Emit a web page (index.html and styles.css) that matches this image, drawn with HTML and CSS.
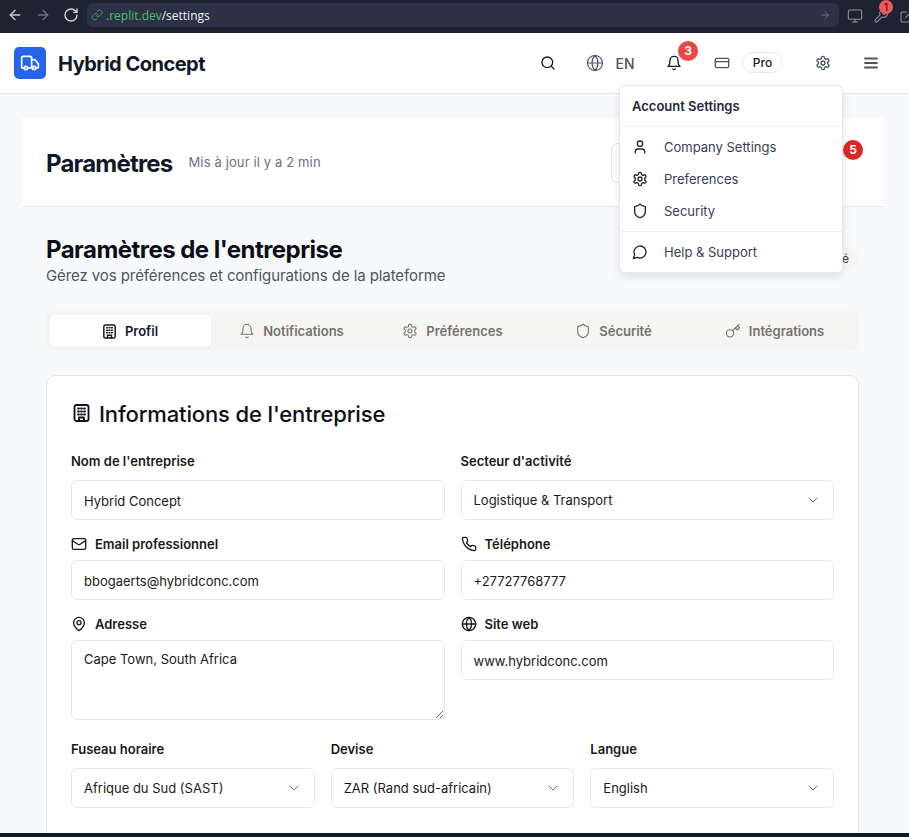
FILE: index.html
```html
<!DOCTYPE html>
<html lang="fr">
<head>
  <meta charset="UTF-8"/>
  <meta name="viewport" content="width=device-width, initial-scale=1.0"/>
  <title>Paramètres</title>
  <link rel="stylesheet" href="styles.css">
</head>
<body>
  <svg class="sprites" width="0" height="0">
    <symbol id="i-truck" viewBox="0 0 24 24"><path d="M14 18V6a2 2 0 0 0-2-2H4a2 2 0 0 0-2 2v11a1 1 0 0 0 1 1h2"/><path d="M15 18H9"/><path d="M19 18h2a1 1 0 0 0 1-1v-3.65a1 1 0 0 0-.22-.624l-3.48-4.35A1 1 0 0 0 17.52 8H14"/><circle cx="17" cy="18" r="2"/><circle cx="7" cy="18" r="2"/></symbol>
    <symbol id="i-search" viewBox="0 0 24 24"><circle cx="11" cy="11" r="8"/><path d="m21 21-4.3-4.3"/></symbol>
    <symbol id="i-globe" viewBox="0 0 24 24"><circle cx="12" cy="12" r="10"/><path d="M12 2a14.5 14.5 0 0 0 0 20 14.5 14.5 0 0 0 0-20"/><path d="M2 12h20"/></symbol>
    <symbol id="i-bell" viewBox="0 0 24 24"><path d="M6 8a6 6 0 0 1 12 0c0 7 3 9 3 9H3s3-2 3-9"/><path d="M10.3 21a1.94 1.94 0 0 0 3.4 0"/></symbol>
    <symbol id="i-card" viewBox="0 0 24 24"><rect x="2" y="5" width="20" height="14" rx="2"/><path d="M2 10h20"/></symbol>
    <symbol id="i-gear" viewBox="0 0 24 24"><path d="M12.22 2h-.44a2 2 0 0 0-2 2v.18a2 2 0 0 1-1 1.73l-.43.25a2 2 0 0 1-2 0l-.15-.08a2 2 0 0 0-2.73.73l-.22.38a2 2 0 0 0 .73 2.73l.15.1a2 2 0 0 1 1 1.72v.51a2 2 0 0 1-1 1.74l-.15.09a2 2 0 0 0-.73 2.73l.22.38a2 2 0 0 0 2.73.73l.15-.08a2 2 0 0 1 2 0l.43.25a2 2 0 0 1 1 1.73V20a2 2 0 0 0 2 2h.44a2 2 0 0 0 2-2v-.18a2 2 0 0 1 1-1.73l.43-.25a2 2 0 0 1 2 0l.15.08a2 2 0 0 0 2.73-.73l.22-.39a2 2 0 0 0-.73-2.73l-.15-.08a2 2 0 0 1-1-1.74v-.5a2 2 0 0 1 1-1.74l.15-.09a2 2 0 0 0 .73-2.73l-.22-.38a2 2 0 0 0-2.73-.73l-.15.08a2 2 0 0 1-2 0l-.43-.25a2 2 0 0 1-1-1.73V4a2 2 0 0 0-2-2z"/><circle cx="12" cy="12" r="3"/></symbol>
    <symbol id="i-menu" viewBox="0 0 24 24"><path d="M4 6h16"/><path d="M4 12h16"/><path d="M4 18h16"/></symbol>
    <symbol id="i-user" viewBox="0 0 24 24"><path d="M19 21v-2a4 4 0 0 0-4-4H9a4 4 0 0 0-4 4v2"/><circle cx="12" cy="7" r="4"/></symbol>
    <symbol id="i-shield" viewBox="0 0 24 24"><path d="M20 13c0 5-3.5 7.5-7.66 8.95a1 1 0 0 1-.67-.01C7.5 20.5 4 18 4 13V6a1 1 0 0 1 1-1c2 0 4.5-1.2 6.24-2.72a1.17 1.17 0 0 1 1.52 0C14.51 3.81 17 5 19 5a1 1 0 0 1 1 1z"/></symbol>
    <symbol id="i-message" viewBox="0 0 24 24"><path d="M7.9 20A9 9 0 1 0 4 16.1L2 22Z"/></symbol>
    <symbol id="i-building" viewBox="0 0 16 18"><rect x="1" y="1" width="14" height="16" rx="2"/><path d="M4.5 4.5h1M7.5 4.5h1M10.5 4.5h1M4.5 7.5h1M7.5 7.5h1M10.5 7.5h1M4.5 10.5h1M7.5 10.5h1M10.5 10.5h1"/><path d="M5.5 17v-3.5h5V17"/></symbol>
    <symbol id="i-mail" viewBox="0 0 24 24"><rect x="2" y="4" width="20" height="16" rx="2"/><path d="m22 7-8.97 5.7a1.94 1.94 0 0 1-2.06 0L2 7"/></symbol>
    <symbol id="i-phone" viewBox="0 0 24 24"><path d="M22 16.92v3a2 2 0 0 1-2.18 2 19.79 19.79 0 0 1-8.63-3.07 19.5 19.5 0 0 1-6-6 19.79 19.79 0 0 1-3.07-8.67A2 2 0 0 1 4.11 2h3a2 2 0 0 1 2 1.72 12.84 12.84 0 0 0 .7 2.81 2 2 0 0 1-.45 2.11L8.09 9.91a16 16 0 0 0 6 6l1.27-1.27a2 2 0 0 1 2.11-.45 12.84 12.84 0 0 0 2.81.7A2 2 0 0 1 22 16.92z"/></symbol>
    <symbol id="i-pin" viewBox="0 0 24 24"><path d="M20 10c0 6-8 12-8 12s-8-6-8-12a8 8 0 0 1 16 0Z"/><circle cx="12" cy="10" r="3"/></symbol>
    <symbol id="i-key" viewBox="0 0 24 24"><circle cx="7.5" cy="15.5" r="5.5"/><path d="m21 2-9.6 9.6"/><path d="m15.5 7.5 3 3L22 7l-3-3"/></symbol>
    <symbol id="i-chevron" viewBox="0 0 24 24"><path d="m6 9 6 6 6-6"/></symbol>
    <symbol id="i-left" viewBox="0 0 24 24"><path d="m12 19-7-7 7-7"/><path d="M19 12H5"/></symbol>
    <symbol id="i-right" viewBox="0 0 24 24"><path d="M5 12h14"/><path d="m12 5 7 7-7 7"/></symbol>
    <symbol id="i-reload" viewBox="0 0 24 24"><path d="M21 12a9 9 0 1 1-9-9c2.52 0 4.93 1 6.74 2.74L21 8"/><path d="M21 3v5h-5"/></symbol>
    <symbol id="i-link" viewBox="0 0 24 24"><path d="M10 13a5 5 0 0 0 7.54.54l3-3a5 5 0 0 0-7.07-7.07l-1.72 1.71"/><path d="M14 11a5 5 0 0 0-7.54-.54l-3 3a5 5 0 0 0 7.07 7.07l1.71-1.71"/></symbol>
    <symbol id="i-monitor" viewBox="0 0 24 24"><rect x="2" y="3" width="20" height="14" rx="2"/><path d="M8 21h8"/><path d="M12 17v4"/></symbol>
    <symbol id="i-wrench" viewBox="0 0 24 24"><path d="M14.7 6.3a1 1 0 0 0 0 1.4l1.6 1.6a1 1 0 0 0 1.4 0l3.77-3.77a6 6 0 0 1-7.94 7.94l-6.91 6.91a2.12 2.12 0 0 1-3-3l6.91-6.91a6 6 0 0 1 7.94-7.94l-3.76 3.76z"/></symbol>
    <symbol id="i-external" viewBox="0 0 24 24"><path d="M15 3h6v6"/><path d="M10 14 21 3"/><path d="M18 13v6a2 2 0 0 1-2 2H5a2 2 0 0 1-2-2V8a2 2 0 0 1 2-2h6"/></symbol>
  </svg>

  <div class="browser-bar">
    <svg class="icon chrome-icon"><use href="#i-left"/></svg>
    <svg class="icon chrome-icon dim"><use href="#i-right"/></svg>
    <svg class="icon chrome-icon reload"><use href="#i-reload"/></svg>
    <div class="url-bar">
      <svg class="icon url-link"><use href="#i-link"/></svg>
      <span class="url-host">.replit.dev</span><span class="url-path">/settings</span>
      <svg class="icon url-go"><use href="#i-right"/></svg>
    </div>
    <svg class="icon chrome-tool"><use href="#i-monitor"/></svg>
    <span class="tool-wrap">
      <svg class="icon chrome-tool"><use href="#i-wrench"/></svg>
      <span class="tool-badge">1</span>
    </span>
    <svg class="icon chrome-tool"><use href="#i-external"/></svg>
  </div>

  <header class="topbar">
    <div class="brand">
      <span class="brand-logo"><svg class="icon"><use href="#i-truck"/></svg></span>
      <span class="brand-name">Hybrid Concept</span>
    </div>
    <nav class="topnav">
      <svg class="icon nav-icon dark nav-search"><use href="#i-search"/></svg>
      <span class="nav-group">
        <svg class="icon nav-globe"><use href="#i-globe"/></svg>
        <span class="nav-lang">EN</span>
      </span>
      <span class="bell-wrap">
        <svg class="icon nav-icon dark"><use href="#i-bell"/></svg>
        <span class="count-badge light">3</span>
      </span>
      <span class="nav-group">
        <svg class="icon nav-icon"><use href="#i-card"/></svg>
        <span class="plan-pill">Pro</span>
      </span>
      <svg class="icon nav-icon"><use href="#i-gear"/></svg>
      <svg class="icon nav-menu"><use href="#i-menu"/></svg>
    </nav>
  </header>

  <div class="account-menu">
    <div class="menu-title">Account Settings</div>
    <div class="menu-list">
      <div class="menu-item"><svg class="icon"><use href="#i-user"/></svg>Company Settings</div>
      <div class="menu-item"><svg class="icon"><use href="#i-gear"/></svg>Preferences</div>
      <div class="menu-item"><svg class="icon"><use href="#i-shield"/></svg>Security</div>
    </div>
    <div class="menu-list last">
      <div class="menu-item"><svg class="icon"><use href="#i-message"/></svg>Help &amp; Support</div>
    </div>
  </div>

  <main class="page">
    <section class="page-head">
      <h1>Paramètres</h1>
      <span class="updated">Mis à jour il y a 2 min</span>
      <div class="page-tools">
        <div class="search-box"></div>
        <span class="tools-end">
          <svg class="icon"><use href="#i-bell"/></svg>
          <span class="count-badge strong">5</span>
        </span>
      </div>
    </section>

    <section class="content">
      <div class="title-row">
        <div>
          <h2>Paramètres de l'entreprise</h2>
          <p>Gérez vos préférences et configurations de la plateforme</p>
        </div>
        <span class="status-pill">Vérifié</span>
      </div>

      <div class="tabs">
        <div class="tab active"><svg class="icon tab-building"><use href="#i-building"/></svg>Profil</div>
        <div class="tab"><svg class="icon"><use href="#i-bell"/></svg>Notifications</div>
        <div class="tab"><svg class="icon"><use href="#i-gear"/></svg>Préférences</div>
        <div class="tab"><svg class="icon"><use href="#i-shield"/></svg>Sécurité</div>
        <div class="tab"><svg class="icon"><use href="#i-key"/></svg>Intégrations</div>
      </div>

      <div class="card">
        <h3><svg class="icon"><use href="#i-building"/></svg>Informations de l'entreprise</h3>

        <div class="form-grid two first">
          <div class="field">
            <label>Nom de l'entreprise</label>
            <div class="control">Hybrid Concept</div>
          </div>
          <div class="field">
            <label>Secteur d'activité</label>
            <div class="control select">Logistique &amp; Transport<svg class="icon"><use href="#i-chevron"/></svg></div>
          </div>
        </div>

        <div class="form-grid two">
          <div class="field with-icon">
            <label><svg class="icon"><use href="#i-mail"/></svg>Email professionnel</label>
            <div class="control">bbogaerts@hybridconc.com</div>
          </div>
          <div class="field with-icon">
            <label><svg class="icon"><use href="#i-phone"/></svg>Téléphone</label>
            <div class="control">+27727768777</div>
          </div>
        </div>

        <div class="form-grid two">
          <div class="field with-icon">
            <label><svg class="icon"><use href="#i-pin"/></svg>Adresse</label>
            <textarea class="control area" readonly>Cape Town, South Africa</textarea>
          </div>
          <div class="field with-icon">
            <label><svg class="icon"><use href="#i-globe"/></svg>Site web</label>
            <div class="control">www.hybridconc.com</div>
          </div>
        </div>

        <div class="form-grid three">
          <div class="field">
            <label>Fuseau horaire</label>
            <div class="control select">Afrique du Sud (SAST)<svg class="icon"><use href="#i-chevron"/></svg></div>
          </div>
          <div class="field">
            <label>Devise</label>
            <div class="control select">ZAR (Rand sud-africain)<svg class="icon"><use href="#i-chevron"/></svg></div>
          </div>
          <div class="field">
            <label>Langue</label>
            <div class="control select">English<svg class="icon"><use href="#i-chevron"/></svg></div>
          </div>
        </div>
      </div>
    </section>
  </main>

  <div class="bottom-strip"></div>
</body>
</html>
```

FILE: styles.css
```css
* {
  box-sizing: border-box;
}
html, body {
  height: 100%;
}
body {
  margin: 0;
  display: flex;
  flex-direction: column;
  overflow: hidden;
  position: relative;
  background-color: #f8f9fb;
  color: #111827;
  font-family: Inter, "Noto Sans", sans-serif;
  font-size: 13px;
}
h1, h2, h3, p {
  margin: 0;
}
.sprites {
  position: absolute;
}
.icon {
  display: block;
  flex-shrink: 0;
  width: 16px;
  height: 16px;
  fill: none;
  stroke: currentColor;
  stroke-width: 2;
  stroke-linecap: round;
  stroke-linejoin: round;
}

/* browser chrome */
.browser-bar {
  flex: 0 0 33px;
  display: flex;
  align-items: flex-start;
  padding: 3px 0 0 7px;
  background-color: #1e2332;
}
.chrome-icon {
  width: 16px;
  height: 16px;
  margin: 4px 12px 0 0;
  color: #c7cad1;
}
.chrome-icon.dim {
  color: #6a6f7d;
}
.chrome-icon.reload {
  margin-right: 8px;
  color: #d5d7dc;
}
.url-bar {
  flex: 0 0 752px;
  height: 24px;
  display: flex;
  align-items: center;
  padding: 0 8px 0 4px;
  border-radius: 6px;
  background-color: #2c3146;
  font-family: "Open Sans", sans-serif;
  font-size: 12px;
}
.url-link {
  width: 12px;
  height: 12px;
  margin-right: 3px;
  color: #3f9d5c;
}
.url-host {
  color: #4fbf6e;
}
.url-path {
  color: #eef0f4;
}
.url-go {
  width: 12px;
  height: 12px;
  margin-left: auto;
  color: #6a6f7d;
}
.chrome-tool {
  margin: 5px 0 0 8px;
  color: #8d919c;
  stroke-width: 1.6;
}
.tool-wrap {
  position: relative;
  margin-left: 10px;
}
.tool-wrap .chrome-tool {
  margin-left: 0;
}
.tool-wrap + .chrome-tool {
  margin-left: 10px;
}
.tool-badge {
  position: absolute;
  top: -3px;
  left: 6px;
  width: 14px;
  height: 14px;
  border-radius: 50%;
  background-color: #f0565a;
  color: #3a1518;
  font-size: 11px;
  line-height: 14px;
  text-align: center;
}

/* top bar */
.topbar {
  flex: 0 0 61px;
  display: flex;
  align-items: center;
  padding: 0 29px 0 14px;
  background-color: #fff;
  border-bottom: 1px solid #e5e7eb;
}
.brand {
  display: flex;
  align-items: center;
  gap: 12px;
}
.brand-logo {
  width: 32px;
  height: 32px;
  display: flex;
  align-items: center;
  justify-content: center;
  border-radius: 5px;
  background-color: #2563eb;
  color: #fff;
}
.brand-logo .icon {
  width: 20px;
  height: 20px;
}
.brand-name {
  margin-top: 2px;
  font-size: 20px;
  font-weight: 700;
  letter-spacing: -0.5px;
  color: #0f172a;
}
.topnav {
  margin-left: auto;
  display: flex;
  align-items: center;
  gap: 31.5px;
}
.nav-group {
  display: flex;
  align-items: center;
  gap: 12px;
}
.nav-icon {
  color: #4b5563;
}
.nav-icon.dark {
  color: #111827;
}
.nav-search {
  margin-right: -1px;
}
.nav-globe {
  width: 18px;
  height: 18px;
  color: #4b5563;
  stroke-width: 1.6;
}
.nav-menu {
  width: 18px;
  height: 18px;
  color: #4b5563;
  stroke-width: 2.4;
}
.nav-lang {
  margin-left: -1px;
  font-size: 14px;
  font-weight: 500;
  color: #4b5563;
}
.plan-pill {
  width: 41px;
  height: 21px;
  margin-bottom: 1px;
  border: 1px solid #e5e7eb;
  border-radius: 11px;
  color: #111827;
  font-size: 12px;
  font-weight: 500;
  line-height: 20px;
  text-align: center;
}
.bell-wrap {
  position: relative;
  margin-right: 0.5px;
}
.count-badge {
  position: absolute;
  width: 20px;
  height: 20px;
  border-radius: 50%;
  color: #fff;
  font-size: 12px;
  font-weight: 700;
  line-height: 20px;
  text-align: center;
}
.count-badge.light {
  top: -14px;
  left: 12px;
  background-color: #ef4444;
}
.count-badge.strong {
  top: -15px;
  left: 15px;
  background-color: #dc2626;
}

/* dropdown */
.account-menu {
  position: absolute;
  z-index: 5;
  top: 85px;
  left: 619px;
  width: 224px;
  height: 188px;
  background-color: #fff;
  border: 1px solid #e5e7eb;
  border-radius: 6px;
  box-shadow: 0 4px 8px rgba(0, 0, 0, 0.1);
}
.menu-title {
  height: 41px;
  padding: 0 12px;
  border-bottom: 1px solid #f0f1f3;
  color: #1f2937;
  font-size: 13px;
  font-weight: 600;
  line-height: 40px;
}
.menu-list {
  padding: 4px 0;
  border-bottom: 1px solid #f0f1f3;
}
.menu-list.last {
  border-bottom: none;
}
.menu-item {
  height: 32px;
  display: flex;
  align-items: center;
  gap: 16px;
  padding-left: 12px;
  color: #374151;
  font-size: 13px;
}
.menu-item .icon {
  color: #1f2937;
}

/* page */
.page {
  flex: 1;
  min-height: 0;
  padding: 24px 26px 0 22px;
}
.page-head {
  height: 89px;
  display: flex;
  align-items: center;
  padding: 2px 0 0 24px;
  background-color: #fff;
  border-bottom: 1px solid #e5e7eb;
}
.page-head h1 {
  font-size: 24px;
  font-weight: 700;
  letter-spacing: -0.8px;
  color: #111827;
}
.updated {
  margin-left: 16px;
  margin-bottom: 2px;
  color: #6b7280;
  font-size: 13px;
  letter-spacing: 0.13px;
}
.page-tools {
  margin-left: auto;
  display: flex;
  align-items: center;
}
.search-box {
  width: 120px;
  height: 40px;
  border: 1px solid #e5e7eb;
  border-radius: 6px;
}
.tools-end {
  position: relative;
  margin: 0 39px 0 97px;
  color: #9ca3af;
}
.content {
  padding: 30px 24px 0;
}
.title-row {
  display: flex;
  align-items: flex-end;
  justify-content: space-between;
}
.title-row h2 {
  margin: -2px 0 2px;
  font-size: 24px;
  font-weight: 700;
  letter-spacing: -0.54px;
  color: #0b0f19;
}
.title-row p {
  color: #4b5563;
  font-size: 15px;
  letter-spacing: -0.09px;
}
.status-pill {
  margin-bottom: 16px;
  padding: 3px 10px;
  border-radius: 12px;
  background-color: #f5f5f4;
  color: #44403c;
  font-size: 12px;
}
.tabs {
  height: 40px;
  display: grid;
  grid-template-columns: repeat(5, 1fr);
  margin-top: 26px;
  padding: 4px;
  border-radius: 8px;
  background-color: #f5f5f4;
}
.tab {
  display: flex;
  align-items: center;
  justify-content: center;
  gap: 8px;
  border-radius: 5px;
  color: #78716c;
  font-size: 13px;
  font-weight: 600;
}
.tab .icon {
  stroke-width: 1.6;
}
.tab .tab-building {
  width: 13px;
  height: 15px;
  margin-right: 1px;
  stroke-width: 1.8;
}
.tab.active {
  background-color: #fff;
  color: #111827;
  box-shadow: 0 1px 2px rgba(0, 0, 0, 0.05);
}
.card {
  height: 500px;
  margin-top: 24px;
  padding: 24px;
  background-color: #fff;
  border: 1px solid #e5e7eb;
  border-radius: 10px;
}
.card h3 {
  display: flex;
  align-items: center;
  gap: 9px;
  font-size: 22px;
  font-weight: 500;
  letter-spacing: -0.14px;
  color: #0b0f19;
  line-height: 28px;
}
.card h3 .icon {
  margin-left: 2px;
  margin-top: -3px;
  width: 17px;
  height: 18px;
  stroke-width: 1.8;
}
.form-grid {
  display: grid;
  gap: 16px;
  margin-top: 14px;
}
.form-grid.first {
  margin-top: 23px;
}
.form-grid.two {
  grid-template-columns: 1fr 1fr;
}
.form-grid.three {
  grid-template-columns: 1fr 1fr 1fr;
  margin-top: 19px;
}
.field {
  display: flex;
  flex-direction: column;
  gap: 9px;
}
.field.with-icon {
  gap: 6px;
}
.field label {
  height: 20px;
  display: flex;
  align-items: center;
  gap: 8px;
  color: #1c1917;
  font-size: 13px;
  font-weight: 600;
}
.control {
  height: 40px;
  display: flex;
  align-items: center;
  justify-content: space-between;
  padding: 1px 12px 0;
  background-color: #fff;
  border: 1px solid #e5e7eb;
  border-radius: 6px;
  color: #1c1917;
  font-family: inherit;
  font-size: 13px;
}
.control.select {
  padding-top: 0;
}
.control.area {
  display: block;
  width: 100%;
  height: 80px;
  padding: 10px 12px;
  resize: vertical;
  outline: none;
}
.select .icon {
  color: #78716c;
  stroke-width: 1.5;
}
.bottom-strip {
  position: absolute;
  left: 0;
  right: 0;
  bottom: 0;
  height: 4px;
  background-color: #111827;
}
```
